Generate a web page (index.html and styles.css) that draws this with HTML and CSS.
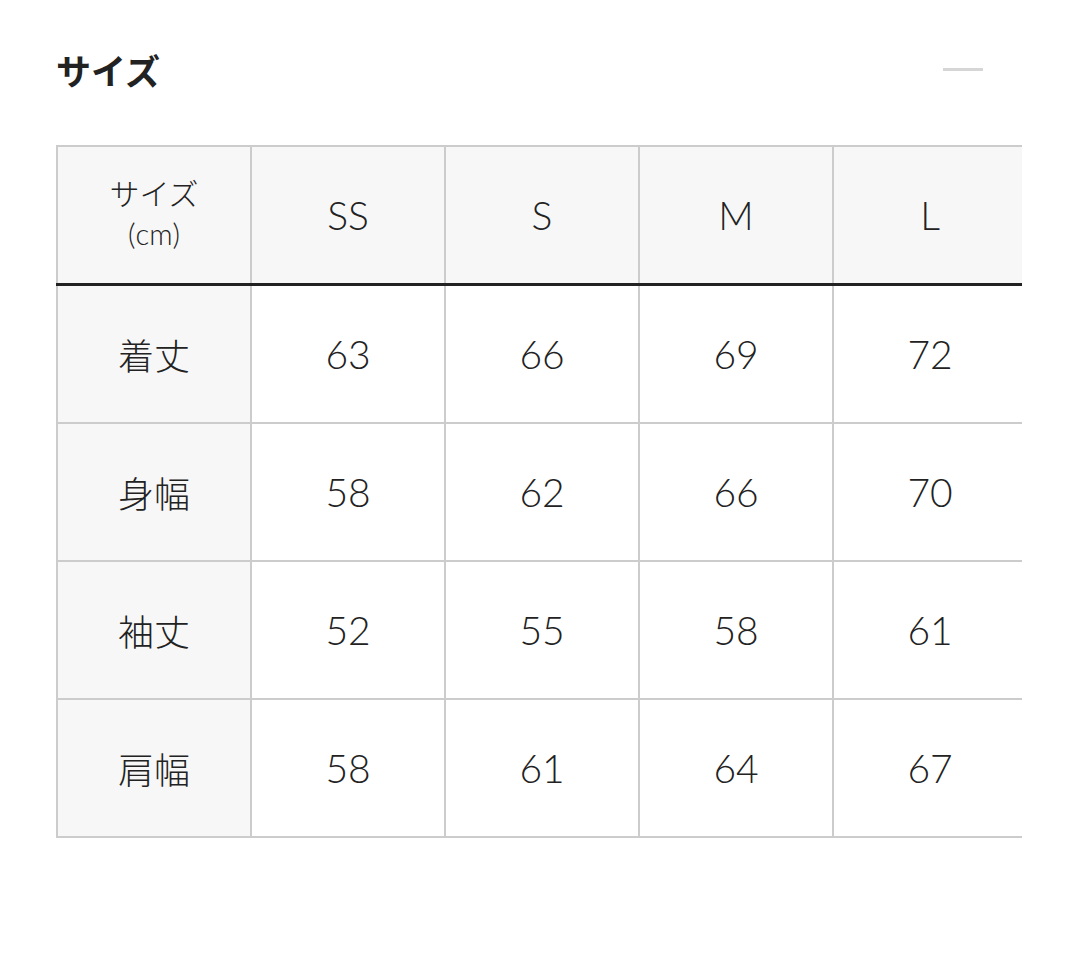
FILE: index.html
```html
<!DOCTYPE html>
<html lang="ja">
<head>
<meta charset="utf-8">
<title>サイズ</title>
<link rel="stylesheet" href="styles.css">
</head>
<body>
<section class="size-section">
  <div class="head">
    <h2 class="title">サイズ</h2>
    <span class="toggle" aria-label="閉じる"></span>
  </div>
  <div class="table-wrap">
    <table class="size-table">
      <thead>
        <tr>
          <th class="label">サイズ<br><span class="unit">(cm)</span></th>
          <th>SS</th>
          <th>S</th>
          <th>M</th>
          <th>L</th>
        </tr>
      </thead>
      <tbody>
        <tr><th class="label">着丈</th><td>63</td><td>66</td><td>69</td><td>72</td></tr>
        <tr><th class="label">身幅</th><td>58</td><td>62</td><td>66</td><td>70</td></tr>
        <tr><th class="label">袖丈</th><td>52</td><td>55</td><td>58</td><td>61</td></tr>
        <tr><th class="label">肩幅</th><td>58</td><td>61</td><td>64</td><td>67</td></tr>
      </tbody>
    </table>
  </div>
</section>
</body>
</html>
```

FILE: styles.css
```css
html, body {
  margin: 0;
  padding: 0;
  background: #fff;
}

body {
  font-family: "Lato", "Noto Sans CJK JP", sans-serif;
  color: #222;
}

.size-section {
  padding: 0 58px 0 56px;
}

.head {
  height: 145px;
  display: flex;
  align-items: flex-start;
  justify-content: space-between;
}

.title {
  margin: 44px 0 0 0;
  font-family: "Noto Sans CJK JP", sans-serif;
  font-size: 35px;
  font-weight: 700;
  line-height: 52px;
  color: #222;
}

.toggle {
  display: block;
  width: 40px;
  height: 3px;
  margin-top: 68px;
  margin-right: 39px;
  background: #d6d6d6;
}

.table-wrap {
  overflow: hidden;
  width: 966px;
}

.size-table {
  border-collapse: collapse;
  table-layout: fixed;
  width: 972px;
  border: 2px solid #cccccc;
}

.size-table th,
.size-table td {
  width: 192px;
  height: 136px;
  padding: 0;
  border: 2px solid #cccccc;
  text-align: center;
  vertical-align: middle;
  font-weight: 300;
  font-size: 39px;
  color: #222;
}

.size-table thead th {
  height: 133px;
  background: #f7f7f7;
  border-bottom: 3px solid #222;
}

.size-table th.label {
  background: #f7f7f7;
  font-family: "Noto Sans CJK JP", sans-serif;
  font-weight: 300;
  font-size: 36px;
}

.size-table thead th.label {
  font-size: 30px;
  line-height: 40px;
  padding-bottom: 4px;
  height: 132px;
}

.unit {
  font-family: "Lato", sans-serif;
  font-weight: 300;
  font-size: 29px;
}
```
